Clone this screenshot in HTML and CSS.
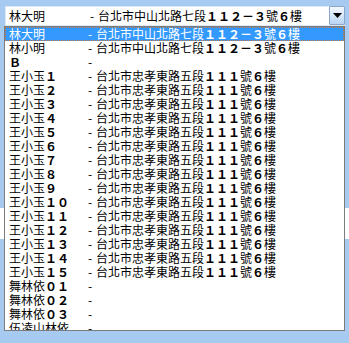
FILE: index.html
```html
<!DOCTYPE html>
<html lang="zh-Hant">
<head>
    <meta charset="UTF-8">
    <meta name="viewport" content="width=device-width, initial-scale=1.0">
    <title>Combo</title>
    <link rel="stylesheet" href="styles.css">
</head>
<body>
    <div class="combo">
        <div class="combo-text">
            <span class="name">林大明</span>
            <span class="dash">-</span>
            <span class="addr">台北市中山北路七段<b>１１２－３</b>號<b>６</b>樓</span>
        </div>
        <div class="combo-btn">
            <svg width="9" height="5" viewBox="0 0 9 5"><path d="M0 0h9L4.5 5z" fill="#000"/></svg>
        </div>
    </div>
    <div class="band"></div>

    <ul class="list">
        <li class="row selected"><span class="name">林大明</span><span class="dash">-</span><span class="addr">台北市中山北路七段<b>１１２－３</b>號<b>６</b>樓</span></li>
        <li class="row"><span class="name">林小明</span><span class="dash">-</span><span class="addr">台北市中山北路七段<b>１１２－３</b>號<b>６</b>樓</span></li>
        <li class="row"><span class="name"><b>Ｂ</b></span><span class="dash">-</span><span class="addr"></span></li>
        <li class="row"><span class="name">王小玉<b>１</b></span><span class="dash">-</span><span class="addr">台北市忠孝東路五段<b>１１１</b>號<b>６</b>樓</span></li>
        <li class="row"><span class="name">王小玉<b>２</b></span><span class="dash">-</span><span class="addr">台北市忠孝東路五段<b>１１１</b>號<b>６</b>樓</span></li>
        <li class="row"><span class="name">王小玉<b>３</b></span><span class="dash">-</span><span class="addr">台北市忠孝東路五段<b>１１１</b>號<b>６</b>樓</span></li>
        <li class="row"><span class="name">王小玉<b>４</b></span><span class="dash">-</span><span class="addr">台北市忠孝東路五段<b>１１１</b>號<b>６</b>樓</span></li>
        <li class="row"><span class="name">王小玉<b>５</b></span><span class="dash">-</span><span class="addr">台北市忠孝東路五段<b>１１１</b>號<b>６</b>樓</span></li>
        <li class="row"><span class="name">王小玉<b>６</b></span><span class="dash">-</span><span class="addr">台北市忠孝東路五段<b>１１１</b>號<b>６</b>樓</span></li>
        <li class="row"><span class="name">王小玉<b>７</b></span><span class="dash">-</span><span class="addr">台北市忠孝東路五段<b>１１１</b>號<b>６</b>樓</span></li>
        <li class="row"><span class="name">王小玉<b>８</b></span><span class="dash">-</span><span class="addr">台北市忠孝東路五段<b>１１１</b>號<b>６</b>樓</span></li>
        <li class="row"><span class="name">王小玉<b>９</b></span><span class="dash">-</span><span class="addr">台北市忠孝東路五段<b>１１１</b>號<b>６</b>樓</span></li>
        <li class="row"><span class="name">王小玉<b>１０</b></span><span class="dash">-</span><span class="addr">台北市忠孝東路五段<b>１１１</b>號<b>６</b>樓</span></li>
        <li class="row"><span class="name">王小玉<b>１１</b></span><span class="dash">-</span><span class="addr">台北市忠孝東路五段<b>１１１</b>號<b>６</b>樓</span></li>
        <li class="row"><span class="name">王小玉<b>１２</b></span><span class="dash">-</span><span class="addr">台北市忠孝東路五段<b>１１１</b>號<b>６</b>樓</span></li>
        <li class="row"><span class="name">王小玉<b>１３</b></span><span class="dash">-</span><span class="addr">台北市忠孝東路五段<b>１１１</b>號<b>６</b>樓</span></li>
        <li class="row"><span class="name">王小玉<b>１４</b></span><span class="dash">-</span><span class="addr">台北市忠孝東路五段<b>１１１</b>號<b>６</b>樓</span></li>
        <li class="row"><span class="name">王小玉<b>１５</b></span><span class="dash">-</span><span class="addr">台北市忠孝東路五段<b>１１１</b>號<b>６</b>樓</span></li>
        <li class="row"><span class="name">舞林依<b>０１</b></span><span class="dash">-</span><span class="addr"></span></li>
        <li class="row"><span class="name">舞林依<b>０２</b></span><span class="dash">-</span><span class="addr"></span></li>
        <li class="row"><span class="name">舞林依<b>０３</b></span><span class="dash">-</span><span class="addr"></span></li>
        <li class="row"><span class="name">伍凌山林依</span><span class="dash">-</span><span class="addr"></span></li>
    </ul>
</body>
</html>
```

FILE: styles.css
```css
*{
    margin: 0;
    padding: 0;
    box-sizing: border-box;
}
body{
    min-height: 100vh;
    background-color: #a6caf0;
    font-family: "Noto Sans CJK TC", "Noto Sans CJK SC", sans-serif;
    font-size: 12px;
    color: #000;
}
b {
    font-weight: bold;
}
.combo {
    display: flex;
    margin: 6px 4px 0 5px;
    height: 20px;
    background-color: #fff;
    border: 1px solid #dce8f6;
}
.combo-text {
    flex: 1;
    display: flex;
    align-items: center;
    padding-left: 3px;
    line-height: 14px;
}
.combo-text .name {
    width: 81px;
}
.combo-btn {
    width: 16px;
    display: flex;
    align-items: center;
    justify-content: center;
    border: 1px solid #8aa6c8;
    border-radius: 1px;
    background: linear-gradient(#f4f8fe, #b9d5f5);
    margin: -1px -1px 0 0;
}
.band {
    margin-top: 182px;
    height: 31px;
    background-color: #fff;
}
.list {
    list-style: none;
    position: absolute;
    left: 4px;
    top: 26px;
    width: 341px;
    height: 305px;
    background-color: #fff;
    border: 1px solid #7c7c7c;
    overflow: hidden;
}
.row {
    display: flex;
    height: 14px;
    line-height: 14px;
    padding-left: 4px;
    white-space: nowrap;
}
.name {
    width: 79px;
}
.dash {
    width: 8px;
}
.selected {
    background-color: #3399ff;
    color: #fff;
    outline: 1px dotted #c8743a;
    outline-offset: -1px;
}
```
